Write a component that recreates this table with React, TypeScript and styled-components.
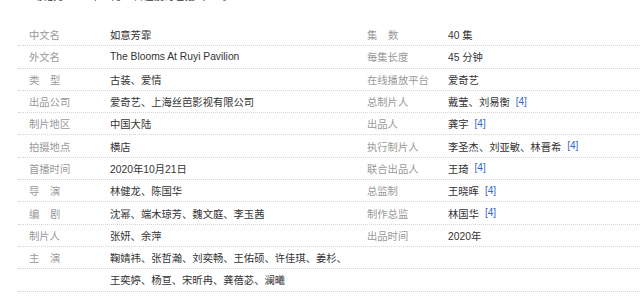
import React from "react";
import styled, { createGlobalStyle } from "styled-components";

const GlobalStyle = createGlobalStyle`
  html, body {
    margin: 0;
    padding: 0;
    background: #fff;
  }
  body {
    font-family: "Liberation Sans", Arial, "Noto Sans CJK SC", sans-serif;
  }
`;

//styles
const Page = styled.div`
  width: 640px;
  height: 302px;
  overflow: hidden;
  padding-left: 18px;
  box-sizing: border-box;
`;

const Lead = styled.p`
  margin: -12px 0 18px;
  height: 18px;
  line-height: 18px;
  padding-left: 18px;
  font-size: 10.3px;
  color: #333;
  white-space: nowrap;
`;

const InfoTable = styled.div`
  display: flex;
  flex-direction: column;
`;

const Row = styled.div`
  display: flex;
  height: 22.3px;
  box-sizing: border-box;
  border-bottom: 1px dotted #d4d4d4;
`;

const Cell = styled.div<{ $wide?: boolean }>`
  display: flex;
  align-items: center;
  width: ${(p) => (p.$wide ? "auto" : "338px")};
  flex: ${(p) => (p.$wide ? "1" : "none")};
  font-size: 10.3px;
  white-space: nowrap;
`;

const Label = styled.span<{ $spread?: boolean }>`
  width: 92px;
  padding-left: 11px;
  box-sizing: border-box;
  flex: none;
  color: #999;
  letter-spacing: ${(p) => (p.$spread ? "1.05em" : "0")};
`;

const Value = styled.span`
  color: #333;
`;

const Ref = styled.sup`
  font-size: 10px;
  color: #3366cc;
  margin-left: 6px;
  line-height: 0;
  vertical-align: 4px;
`;

interface IItem {
  label: string;
  value: string;
  spread?: boolean;
  cite?: boolean;
}

const rows: [IItem, IItem | null][] = [
  [{ label: "中文名", value: "如意芳霏" }, { label: "集数", value: "40 集", spread: true }],
  [{ label: "外文名", value: "The Blooms At Ruyi Pavilion" }, { label: "每集长度", value: "45 分钟" }],
  [{ label: "类型", value: "古装、爱情", spread: true }, { label: "在线播放平台", value: "爱奇艺" }],
  [{ label: "出品公司", value: "爱奇艺、上海丝芭影视有限公司" }, { label: "总制片人", value: "戴莹、刘易衡", cite: true }],
  [{ label: "制片地区", value: "中国大陆" }, { label: "出品人", value: "龚宇", cite: true }],
  [{ label: "拍摄地点", value: "横店" }, { label: "执行制片人", value: "李圣杰、刘亚敏、林晋希", cite: true }],
  [{ label: "首播时间", value: "2020年10月21日" }, { label: "联合出品人", value: "王琦", cite: true }],
  [{ label: "导演", value: "林健龙、陈国华", spread: true }, { label: "总监制", value: "王晓晖", cite: true }],
  [{ label: "编剧", value: "沈幂、端木琼芳、魏文庭、李玉茜", spread: true }, { label: "制作总监", value: "林国华", cite: true }],
  [{ label: "制片人", value: "张妍、余萍" }, { label: "出品时间", value: "2020年" }],
];

const actors = [
  "鞠婧祎、张哲瀚、刘奕畅、王佑硕、许佳琪、姜杉、",
  "王奕婷、杨亘、宋昕冉、龚蓓苾、澜曦",
];

const InfoCell: React.FC<{ item: IItem | null; wide?: boolean }> = ({ item, wide }) => (
  <Cell $wide={wide}>
    {item && (
      <>
        <Label $spread={item.spread}>{item.label}</Label>
        <Value>{item.value}</Value>
        {item.cite && <Ref>[4]</Ref>}
      </>
    )}
  </Cell>
);

const App: React.FC = () => {
  return (
    <Page>
      <GlobalStyle />
      <Lead>
        该剧于2020年10月21日在爱奇艺播出<Ref>[4]</Ref>。
      </Lead>
      <InfoTable>
        {rows.map(([left, right], i) => (
          <Row key={i}>
            <InfoCell item={left} />
            <InfoCell item={right} wide />
          </Row>
        ))}
        {actors.map((line, i) => (
          <Row key={"a" + i}>
            <Cell $wide>
              <Label $spread>{i === 0 ? "主演" : ""}</Label>
              <Value>{line}</Value>
            </Cell>
          </Row>
        ))}
      </InfoTable>
    </Page>
  );
};

export default App;
